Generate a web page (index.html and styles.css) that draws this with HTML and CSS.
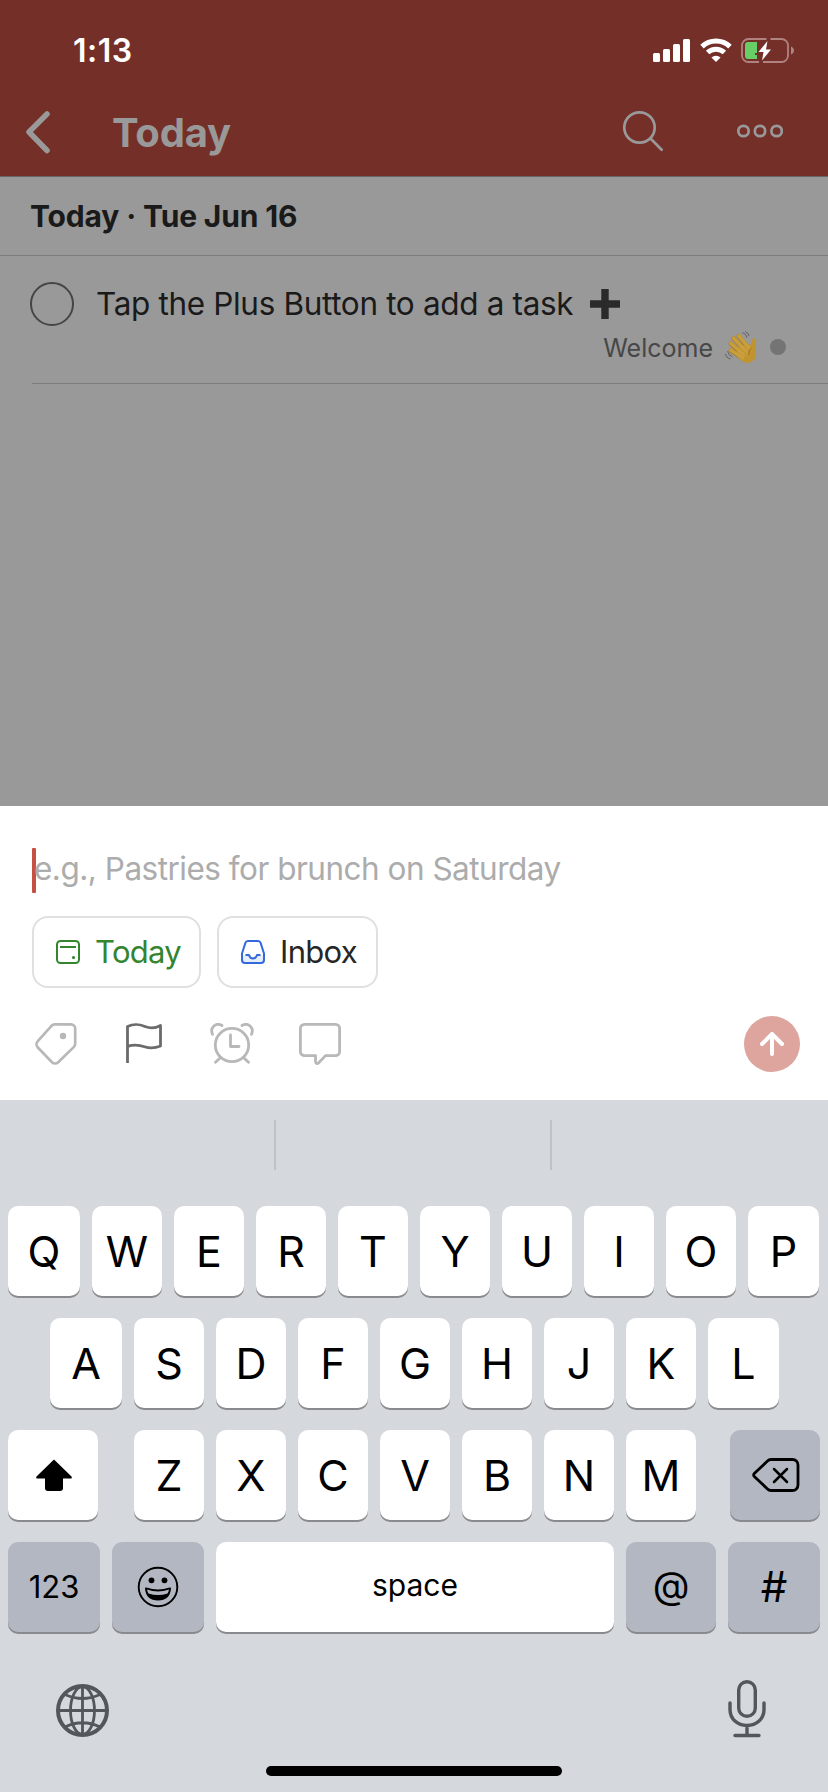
FILE: index.html
```html
<!DOCTYPE html>
<html lang="en">
<head>
<meta charset="utf-8">
<title>Today</title>
<link rel="stylesheet" href="styles.css">
</head>
<body>
<div class="screen">
  <header class="top">
    <div class="status">
      <span class="clock">1:13</span>
      <div class="status-icons">
        <svg class="signal" width="37" height="24" viewBox="0 0 37 24" fill="#fff"><rect x="0" y="15" width="7" height="9" rx="1.5"/><rect x="10" y="11" width="7" height="13" rx="1.5"/><rect x="20" y="6" width="7" height="18" rx="1.5"/><rect x="30" y="1" width="7" height="23" rx="1.5"/></svg>
        <svg class="wifi" width="32" height="24" viewBox="0 0 32 24" fill="none" stroke="#fff" stroke-width="5"><path d="M2 8.6a20.3 20.3 0 0 1 28 0"/><path d="M7.6 14.5a12.4 12.4 0 0 1 16.8 0"/><path d="M16 24l-4.6-4.6a7 7 0 0 1 9.2 0z" fill="#fff" stroke="none"/></svg>
        <svg class="battery" width="53" height="25" viewBox="0 0 53 25"><path d="M25.5 1H7.5A6.5 6.5 0 0 0 1 7.500V17.500A6.500 6.500 0 0 0 7.500 24H18M29.500 1H40.500A6.500 6.500 0 0 1 47 7.500V17.500A6.500 6.500 0 0 1 40.500 24H22" fill="none" stroke="#b08380" stroke-width="1.8"/><path d="M7 4h9v11h-2v2h2v4H7a3 3 0 0 1-3-3V7a3 3 0 0 1 3-3z" fill="#67ce67"/><path d="M26.500 3L17.500 14H22.500L21 22.500L30 11.500H25z" fill="#fff"/><path d="M50 8.500c4 1.500 4 6.500 0 8z" fill="#b08380"/></svg>
      </div>
    </div>
    <nav class="nav">
      <svg class="back" width="26" height="44" viewBox="0 0 26 44" fill="none" stroke="#999" stroke-width="5.500" stroke-linecap="round" stroke-linejoin="round"><path d="M22 4L4 22l18 18.500"/></svg>
      <h1 class="title">Today</h1>
      <svg class="search" width="42" height="42" viewBox="0 0 42 42" fill="none" stroke="#999" stroke-width="2.700" stroke-linecap="round"><circle cx="17.500" cy="17.500" r="15.200"/><path d="M28.500 28.500L39.700 39.700"/></svg>
      <svg class="more" width="46" height="14" viewBox="0 0 46 14" fill="none" stroke="#999" stroke-width="2.700"><circle cx="6.500" cy="7" r="5.200"/><circle cx="23" cy="7" r="5.200"/><circle cx="39.600" cy="7" r="5.200"/></svg>
    </nav>
  </header>

  <h2 class="section">Today · Tue Jun 16</h2>

  <main class="list">
    <article class="task">
      <span class="check"></span>
      <div class="task-body">
        <div class="task-title"><span>Tap the Plus Button to add a task</span>
          <svg width="30" height="30" viewBox="0 0 30 30" fill="#2a2a2a"><path d="M11.300 0h7.400v11.300H30v7.400H18.700V30h-7.400V18.700H0v-7.400h11.300z"/></svg>
        </div>
        <div class="project"><span class="project-name">Welcome</span>
          <svg class="wave" width="36" height="36" viewBox="0 0 108 108" fill="none" stroke-linecap="round">
            <g stroke="#a77b22" stroke-width="13"><path d="M26 64L62 88M26 44L66 79M34 28L75 70M50 21L82 60"/></g>
            <path d="M49 54L78 44 87 48Q88 31 97 28Q105 28 101 42Q99 57 102 69Q105 91 87 99Q71 107 57 94L41 77z" fill="#c0942f"/>
            <g stroke="#c99e3c" stroke-width="10"><path d="M26 63L62 87M26 43L66 78M34 27L75 69M50 20L82 58"/></g>
            <path d="M88 58Q78 64 81 76" stroke="#9b7020" stroke-width="3"/>
            <path d="M62 11Q72 13 75 25M71 8Q80 12 81 20M10 76Q13 87 24 90M17 68Q20 80 30 83" stroke="#555" stroke-width="2.500"/>
          </svg>
          <span class="project-dot"></span>
        </div>
      </div>
    </article>
  </main>

  <section class="composer">
    <div class="field"><span class="caret"></span><span class="placeholder">e.g., Pastries for brunch on Saturday</span></div>
    <div class="chips">
      <div class="chip chip-date">
        <svg width="24" height="24" viewBox="0 0 24 24" fill="none" stroke="#33852f" stroke-width="2"><rect x="1" y="1" width="22" height="22" rx="3.500"/><path d="M4 7h16"/><circle cx="17.500" cy="17.500" r="1.600" fill="#33852f" stroke="none"/></svg>
        <span>Today</span>
      </div>
      <div class="chip chip-inbox">
        <svg width="24" height="24" viewBox="0 0 24 24" fill="none" stroke="#3269dc" stroke-width="2" stroke-linejoin="round"><path d="M1.500 15H7q2 4 5 4t5-4h5.500v7h-21z" fill="#e6edfb" stroke="none"/><path d="M7 1h10a3 3 0 0 1 2.600 1.900L23 13.500V20a3 3 0 0 1-3 3H4a3 3 0 0 1-3-3v-6.500L4.400 2.900A3 3 0 0 1 7 1z"/><path d="M4.500 15H8q1 3.500 4 3.500t4-3.500h3.500"/></svg>
        <span>Inbox</span>
      </div>
    </div>
    <div class="tools">
      <svg width="42" height="42" viewBox="0 0 42 42" fill="none" stroke="#b8b8b8" stroke-width="2.700" stroke-linejoin="round"><path d="M19.800 1.400H36a4.200 4.200 0 0 1 4.200 4.200V20.500a5 5 0 0 1-1.500 3.600L23.200 39.200a4.500 4.500 0 0 1-6.200 0L2.800 24.500a4.500 4.500 0 0 1 0-6.300L16.500 2.800A4.600 4.600 0 0 1 19.800 1.400z"/><circle cx="28" cy="13" r="3.200" fill="#b8b8b8" stroke="none"/></svg>
      <svg width="36" height="42" viewBox="0 0 36 42" fill="none" stroke="#6b6b6b" stroke-width="2.800" stroke-linejoin="round"><path d="M1.500 40V3.500C9 0 14 1.500 19 3.500s10 2 15.500-1V23c-6 2.500-11 2.500-16 .7S8 21.300 1.500 23.300"/></svg>
      <svg width="44" height="42" viewBox="0 0 44 42" fill="none" stroke="#b8b8b8" stroke-width="2.800" stroke-linecap="round"><circle cx="22" cy="22" r="16.700"/><path d="M20.500 12v11.500H29M10 35L5.500 39.300M34 35l4.500 4.300M2.500 11.300C-.5 4.500 6 -1 12 2.500M41.500 11.300C44.500 4.500 38 -1 32 2.500" stroke-linejoin="round"/></svg>
      <svg width="42" height="42" viewBox="0 0 42 42" fill="none" stroke="#b8b8b8" stroke-width="2.800" stroke-linejoin="round"><path d="M5.500 1.400h31a4.100 4.100 0 0 1 4.100 4.100V28.500a4.100 4.100 0 0 1-4.100 4.100H26.500L19.500 40q-2.500 1.500-3-1.200V32.600H5.500a4.100 4.100 0 0 1-4.100-4.100V5.500a4.100 4.100 0 0 1 4.100-4.100z"/></svg>
      <span class="send"><svg width="24" height="24" viewBox="0 0 24 24" fill="none" stroke="#fff" stroke-width="4" stroke-linecap="round" stroke-linejoin="round"><path d="M2 12L12 2l10 10M12 3v19"/></svg></span>
    </div>
  </section>

  <section class="keyboard">
    <div class="suggestions"><span></span><span></span><span></span></div>
    <div class="keys">
      <div class="row row-1"><b class="key">Q</b><b class="key">W</b><b class="key">E</b><b class="key">R</b><b class="key">T</b><b class="key">Y</b><b class="key">U</b><b class="key">I</b><b class="key">O</b><b class="key">P</b></div>
      <div class="row row-2"><b class="key">A</b><b class="key">S</b><b class="key">D</b><b class="key">F</b><b class="key">G</b><b class="key">H</b><b class="key">J</b><b class="key">K</b><b class="key">L</b></div>
      <div class="row row-3">
        <b class="key shift"><svg width="38" height="34" viewBox="0 0 38 34"><path d="M19 1.500L36.500 18.500Q37.500 20.500 35.500 20.500H28V30a3 3 0 0 1-3 3H13a3 3 0 0 1-3-3V20.500H2.500Q.500 20.500 1.500 18.500z"/></svg></b>
        <b class="key">Z</b><b class="key">X</b><b class="key">C</b><b class="key">V</b><b class="key">B</b><b class="key">N</b><b class="key">M</b>
        <b class="key dark delete"><svg width="48" height="34" viewBox="0 0 48 34" fill="none" stroke="#000" stroke-width="2.800" stroke-linecap="round" stroke-linejoin="round"><path d="M19 1.500H40.500A5.500 5.500 0 0 1 46 7V27A5.500 5.500 0 0 1 40.500 32.500H19a5 5 0 0 1-3.500-1.500L2.300 18.500a2.300 2.300 0 0 1 0-3L15.500 3A5 5 0 0 1 19 1.500z"/><path d="M22 11L35 24M35 11L22 24" stroke-width="2.500"/></svg></b>
      </div>
      <div class="row row-4">
        <b class="key dark small digits">123</b>
        <b class="key dark"><svg width="42" height="42" viewBox="0 0 42 42"><circle cx="21" cy="21" r="19.300" fill="none" stroke="#000" stroke-width="1.900"/><circle cx="14.500" cy="14.300" r="2.900"/><circle cx="27.500" cy="14.300" r="2.900"/><path d="M8 22.500q0-1.500 1.500-1Q21 25.500 32.500 21.500q1.500-.500 1.500 1Q33 34.500 21 34.500T8 22.500z"/><path d="M10 23.500Q21 27.500 32 23.500Q31.500 26 30.500 27.500Q21 30.500 11.500 27.500Q10.500 26 10 23.500z" fill="#b3b7c1"/></svg></b>
        <b class="key small space">space</b>
        <b class="key dark at">@</b>
        <b class="key dark hash">#</b>
      </div>
    </div>
    <div class="dock">
      <svg width="54" height="54" viewBox="0 0 54 54" fill="none" stroke="#53565b" stroke-width="2.800"><circle cx="26.500" cy="26.500" r="24.500" stroke-width="4"/><path d="M26.500 2v49M2 26.500h49M9 10.500Q26.500 18.500 44 10.500M9 43Q26.500 34.500 44 43"/><ellipse cx="26.500" cy="26.500" rx="12" ry="24"/></svg>
      <svg width="38" height="58" viewBox="0 0 38 58" fill="none" stroke="#53565b" stroke-width="3.400" stroke-linecap="round"><rect x="10.700" y="1.700" width="16.600" height="34.600" rx="8.300"/><path d="M2 23v6.500C2 39 9.500 45.500 19 45.500S36 39 36 29.500V23M19 46v9M7 55.500h24"/></svg>
    </div>
    <div class="home"></div>
  </section>
</div>
</body>
</html>
```
FILE: styles.css
```css
* { box-sizing: border-box; }
body { margin: 0; background: #fff; }
svg { display: block; flex: none; }
.screen {
  width: 828px; height: 1792px; overflow: hidden;
  display: flex; flex-direction: column;
  font-family: Inter, "Liberation Sans", sans-serif;
  color: #1a1a1a; background: #999;
}
.top { height: 177px; background: #742f28; border-bottom: 1px solid #6a6664; }
.status { height: 88px; padding: 12px 34px 0 73px; display: flex; justify-content: space-between; align-items: center; }
.clock { font-size: 32px; font-weight: 600; color: #fff; letter-spacing: 0.5px; }
.status-icons { display: flex; align-items: center; }
.wifi { margin-left: 10px; }
.battery { margin-left: 9px; }
.nav { height: 88px; padding-left: 25px; display: flex; align-items: center; }
.title { margin: 0 0 0 61px; font-size: 40px; font-weight: 700; color: #999; letter-spacing: -0.2px; flex: 1; }
.search { margin-right: 73px; margin-top: -2px; }
.more { margin-right: 45px; margin-top: -2px; }
.section {
  margin: 0; height: 79px; padding-left: 30px; display: flex; align-items: center;
  border-bottom: 1px solid #7d7d7d; font-size: 30px; font-weight: 700; white-space: pre; letter-spacing: -0.15px;
}
.list { height: 550px; flex: none; }
.task { margin-left: 32px; height: 128px; border-bottom: 1px solid #7d7d7d; display: flex; }
.check { width: 44px; height: 44px; margin: 26px 22px 0 -2px; border: 2px solid #454545; border-radius: 50%; flex: none; }
.task-body { flex: 1; padding-top: 26px; }
.task-title { height: 43px; display: flex; align-items: center; gap: 18px; font-size: 31.500px; letter-spacing: -0.34px; white-space: nowrap; }
.task-title span { width: 476px; }
.project { height: 36px; margin-top: 4px; padding-right: 42px; display: flex; align-items: center; justify-content: flex-end; color: #474747; font-size: 25px; }
.project-name { padding-top: 1px; }
.wave { margin-left: 9px; }
.project-dot { width: 16px; height: 16px; border-radius: 50%; background: #747474; margin-left: 12px; }
.composer { height: 294px; flex: none; background: #fff; padding: 42px 28px 0 32px; }
.field { height: 45px; display: flex; align-items: center; font-size: 31.500px; letter-spacing: -0.5px; color: #acacac; white-space: nowrap; }
.caret { width: 4px; height: 45px; border-radius: 1px; background: #c55145; margin-right: -2px; }
.placeholder { margin-top: -4px; }
.chips { margin-top: 23px; display: flex; gap: 16px; }
.chip { height: 72px; border: 2px solid #e0e0e0; border-radius: 16px; display: flex; align-items: center; gap: 15px; padding-left: 22px; font-size: 31px; letter-spacing: -0.7px; color: #262626; }
.chip span { margin-top: -1px; }
.chip-date { width: 169px; color: #33852f; }
.chip-inbox { width: 161px; }
.tools { margin-top: 28px; height: 56px; padding-left: 3px; display: flex; align-items: center; }
.tools > svg:nth-child(2) { margin-left: 49px; }
.tools > svg:nth-child(3) { margin-left: 48px; }
.tools > svg:nth-child(4) { margin-left: 45px; }
.send { width: 56px; height: 56px; margin-left: auto; border-radius: 50%; background: #dea59e; display: grid; place-items: center; }
.keyboard { height: 692px; flex: none; background: #d5d8dd; color: #000; }
.suggestions { height: 106px; padding-top: 20px; display: flex; }
.suggestions span { width: 276px; height: 50px; border-right: 2px solid #c0c2c6; }
.suggestions span:last-child { border: 0; }
.keys { display: grid; gap: 22px; }
.row { display: grid; column-gap: 12px; height: 90px; }
.row-1 { margin-left: 8px; grid-template-columns: 72px repeat(8, 70px) 71px; }
.row-2 { margin-left: 50px; grid-template-columns: 72px repeat(7, 70px) 71px; }
.row-3 { margin-left: 8px; grid-template-columns: 114px repeat(7, 70px) 112px; }
.row-3 .shift { width: 90px; padding-left: 2px; }
.row-3 .delete { width: 90px; margin-left: 22px; padding-left: 2px; }
.row-4 { margin-left: 8px; grid-template-columns: 92px 93px 398px 90px 92px; column-gap: 12px; }
.key { font-weight: 400; font-size: 43px; background: #fff; border-radius: 10px; box-shadow: 0 2px 0 #898a8d; display: flex; align-items: center; justify-content: center; }
.dark { background: #b3b7c1; }
.small { font-size: 31px; }
.digits { padding-bottom: 1px; }
.space { font-size: 30px; padding-bottom: 4px; }
.at { font-size: 38px; padding-bottom: 5px; }
.hash { font-size: 42px; padding-bottom: 2px; }
.row-4 { grid-template-columns: 92px 92px 398px 90px 92px; }
.dock { height: 134px; margin-top: 48px; padding: 0 62px 0 56px; display: flex; justify-content: space-between; }
.dock svg:first-child { margin-top: 4px; }
.home { width: 296px; height: 10px; margin: -48px auto 0; border-radius: 5px; background: #000; }
```
